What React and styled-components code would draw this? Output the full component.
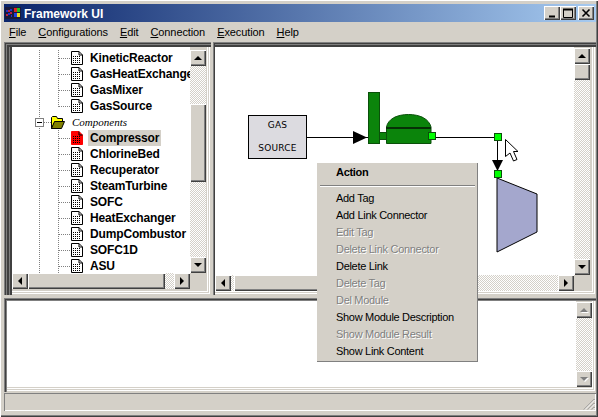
import styled, { createGlobalStyle, css } from 'styled-components';

const GlobalStyle = createGlobalStyle`
    html, body {
        margin: 0;
        padding: 0;
        background: #d4d0c8;
    }
`;

const face = '#d4d0c8';
const raised = css`
    background: ${face};
    box-shadow: inset 1px 1px #fff, inset -1px -1px #404040, inset -2px -2px #808080;
`;
const dither = css`
    background: repeating-conic-gradient(#d4d0c8 0 25%, #fff 0 50%) 0 0 / 2px 2px;
`;
const sunkenEdges = css`
    box-shadow:
        inset 1px 1px #808080,
        inset 2px 2px #404040,
        inset 3px 3px #808080,
        inset 4px 4px #404040,
        inset 5px 5px #404040,
        inset 6px 0 #808080,
        inset 7px 0 #404040,
        inset 8px 0 #404040,
        inset -1px -1px #d4d0c8,
        inset -2px -2px #fff,
        inset -3px -3px #d4d0c8,
        inset -4px -4px #fff;
`;

const Window = styled.div`
    position: relative;
    box-sizing: border-box;
    width: 598px;
    height: 417px;
    padding: 4px 2px 2px 4px;
    display: flex;
    flex-direction: column;
    overflow: hidden;
    background: ${face};
    box-shadow: inset 1px 1px #fff, inset -1px -1px #404040, inset -2px -2px #808080;
    font-family: "Liberation Sans", Arial, sans-serif;
`;

const TitleBar = styled.div`
    height: 18px;
    flex: none;
    display: flex;
    align-items: center;
    padding: 0 2px 0 1px;
    background: linear-gradient(90deg, #0a246a, #a6caf0);
`;

const TitleText = styled.span`
    margin-left: 3px;
    padding-top: 1px;
    flex: 1;
    color: #fff;
    font-size: 12px;
    font-weight: bold;
`;

const CaptionButton = styled.button`
    ${raised}
    width: 16px;
    height: 14px;
    padding: 0;
    border: 0;
    margin-left: ${p => p.$gap || 0}px;
    display: flex;
    align-items: center;
    justify-content: center;
`;

const MenuBar = styled.div`
    height: 20px;
    flex: none;
    display: flex;
    align-items: center;
    gap: 12px;
    padding-left: 5px;
    font-size: 11px;
    letter-spacing: -0.1px;
    color: #000;
`;

const TopRow = styled.div`
    height: 253px;
    flex: none;
    display: flex;
    gap: 2px;
`;

const LeftPane = styled.div`
    ${sunkenEdges}
    box-sizing: border-box;
    width: 207px;
    padding: 5px 5px 6px 8px;
    display: grid;
    grid-template-columns: 178px 16px;
    grid-template-rows: 226px 16px;
    background: ${face};
`;

const RightPane = styled.div`
    box-sizing: border-box;
    width: 383px;
    padding: 5px 6px 4px 2px;
    display: grid;
    grid-template-columns: 359px 16px;
    grid-template-rows: 228px 16px;
    background: ${face};
    box-shadow:
        inset 1px 1px #808080,
        inset 2px 2px #404040,
        inset 0 3px #808080,
        inset 0 4px #404040,
        inset 0 5px #404040,
        inset -1px -1px #d4d0c8,
        inset -2px -2px #fff,
        inset -3px -3px #d4d0c8,
        inset -4px -4px #fff;
`;

const Tree = styled.div`
    background: #fff;
    overflow: hidden;
    padding-top: 3px;
    box-sizing: border-box;
`;

const guideV = (x, size) => `repeating-linear-gradient(to bottom, #808080 0 1px, transparent 1px 2px) ${x}px 0 / 1px ${size} no-repeat`;
const guideH = (x, w) => `repeating-linear-gradient(to right, #808080 0 1px, transparent 1px 2px) ${x}px 8px / ${w}px 1px no-repeat`;

const TreeRow = styled.div`
    height: 16px;
    display: flex;
    align-items: center;
    white-space: nowrap;
    padding-left: 59px;
    background: ${p => `${guideV(27, '100%')}, ${guideV(46, p.$last ? '9px' : '100%')}, ${guideH(47, 12)}`};
`;

const GroupRow = styled.div`
    height: 16px;
    display: flex;
    align-items: center;
    white-space: nowrap;
    padding-left: 23px;
    background: ${guideV(27, '100%')}, ${guideH(32, 8)};
`;

const Expander = styled.span`
    box-sizing: border-box;
    width: 9px;
    height: 9px;
    margin-right: 7px;
    border: 1px solid #808080;
    background: linear-gradient(#000, #000) center / 5px 1px no-repeat #fff;
`;

const GroupLabel = styled.span`
    margin-left: 7px;
    font-family: "Liberation Serif", serif;
    font-style: italic;
    font-size: 11px;
    color: #000;
`;

const NodeLabel = styled.span`
    margin-left: ${p => (p.$selected ? '5px' : '7px')};
    padding: ${p => (p.$selected ? '0 2px' : '0')};
    height: 16px;
    line-height: 16px;
    font-size: 12px;
    font-weight: bold;
    letter-spacing: -0.15px;
    color: #000;
    background: ${p => (p.$selected ? face : 'transparent')};
`;

const VBar = styled.div`
    display: flex;
    flex-direction: column;
    margin-top: ${p => p.$top || 0}px;
`;

const HBar = styled.div`
    display: flex;
`;

const Track = styled.div`
    ${dither}
    ${p => (p.$size ? `flex: none; flex-basis: ${p.$size}px;` : 'flex: 1;')}
`;

const Thumb = styled.div`
    ${raised}
    flex: none;
    flex-basis: ${p => p.$size}px;
`;

const arrows = {
    up: 'border-width: 0 4px 4px; border-color: transparent transparent var(--arrow);',
    down: 'border-width: 4px 4px 0; border-color: var(--arrow) transparent transparent;',
    left: 'border-width: 4px 4px 4px 0; border-color: transparent var(--arrow) transparent transparent;',
    right: 'border-width: 4px 0 4px 4px; border-color: transparent transparent transparent var(--arrow);',
};

const ArrowButton = styled.div`
    ${raised}
    --arrow: ${p => (p.$disabled ? '#808080' : '#000')};
    flex: none;
    width: 16px;
    height: 16px;
    display: flex;
    align-items: center;
    justify-content: center;

    &::after {
        content: '';
        width: 0;
        height: 0;
        border-style: solid;
        ${p => arrows[p.$dir]}
        ${p => p.$disabled && 'filter: drop-shadow(1px 1px 0 #fff);'}
    }
`;

const Corner = styled.div`
    background: ${face};
`;

const Canvas = styled.div`
    position: relative;
    background: #fff;
    overflow: hidden;
`;

const DiagramSvg = styled.svg`
    position: absolute;
    inset: 0;
`;

const SourceNode = styled.div`
    position: absolute;
    left: 33px;
    top: 68px;
    box-sizing: border-box;
    width: 59px;
    height: 44px;
    border: 1px solid #000;
    background: #dcdbe0;
    display: flex;
    flex-direction: column;
    align-items: center;
    justify-content: space-between;
    padding: 3px 0 4px;
    font-family: "DejaVu Sans", sans-serif;
    font-size: 9px;
    line-height: 12px;
    letter-spacing: 0.2px;
    color: #000;
`;

const BottomPane = styled.div`
    box-sizing: border-box;
    height: 94px;
    margin-top: 3px;
    flex: none;
    display: flex;
    padding: 3px 4px 5px 3px;
    background: ${face};
    box-shadow:
        inset 1px 1px #808080,
        inset 2px 2px #404040,
        inset 3px 3px #808080,
        inset -1px -1px #d4d0c8,
        inset -2px -2px #fff,
        inset -3px -3px #d4d0c8,
        inset -4px -4px #fff;
`;

const Output = styled.div`
    flex: 1;
    background: #fff;
`;

const StatusBar = styled.div`
    box-sizing: border-box;
    height: 18px;
    margin-top: 1px;
    flex: none;
    box-shadow: inset 1px 1px #808080, inset -1px -1px #fff;
    position: relative;
`;

const Grip = styled.svg`
    position: absolute;
    right: 1px;
    bottom: 1px;
`;

const ContextMenu = styled.div`
    position: absolute;
    left: 317px;
    top: 163px;
    box-sizing: border-box;
    width: 161px;
    height: 199px;
    padding-left: 2px;
    background: ${face};
    box-shadow: inset -1px -1px #808080;
    font-size: 11px;
    letter-spacing: -0.3px;
`;

const MenuHeading = styled.div`
    height: 18px;
    line-height: 18px;
    padding-left: 17px;
    font-weight: bold;
    color: #000;
`;

const MenuRule = styled.div`
    height: 2px;
    margin: 4px 3px 3px 1px;
    background: linear-gradient(#808080 50%, #fff 50%);
`;

const MenuItem = styled.div`
    height: 17px;
    line-height: 17px;
    padding-left: 17px;
    color: ${p => (p.$disabled ? '#808080' : '#000')};
    text-shadow: ${p => (p.$disabled ? '1px 1px 0 #fff' : 'none')};
`;

function DocIcon({ red }) {
    return (
        <svg width="12" height="14" viewBox="0 0 12 14" style={{ flex: 'none' }}>
            <path d="M0.5 0.5H8L11.5 4V13.5H0.5Z" fill={red ? '#ff0000' : '#fff'} stroke={red ? '#ff0000' : '#000'} />
            <path d="M8 0.5V4H11.5" fill="none" stroke="#000" />
            {[5.5, 7.5, 9.5, 11.5].map(y => (
                <path key={y} d={`M2 ${y}H10`} stroke="#000" strokeDasharray="1 1" />
            ))}
        </svg>
    );
}

function FolderIcon() {
    return (
        <svg width="14" height="13" viewBox="0 0 14 13" style={{ flex: 'none' }}>
            <path d="M0.5 12.5V1.5L1.5 0.5H5.5L6.5 2.5H11.5V5.5H4L0.5 12.5Z" fill="#ffff00" stroke="#000" />
            <path d="M0.5 12.5L3.5 5.5H13.5L10.5 12.5Z" fill="#808000" stroke="#000" />
        </svg>
    );
}

function AppIcon() {
    return (
        <svg width="16" height="14" viewBox="0 0 16 14" style={{ flex: 'none' }}>
            <rect x="0" y="1" width="16" height="12" fill="#1a1a3a" />
            <path d="M1 4h2v2H1zM5 3h2v2H5zM3 7h2v2H3zM6 9h1v2H6z" fill="#2030d0" />
            <path d="M3 4h2v2H3zM1 8h2v2H1zM5 6h2v2H5z" fill="#c02040" />
            <rect x="9" y="2" width="3" height="4" fill="#e02020" />
            <rect x="12" y="2" width="3" height="4" fill="#20c020" />
            <rect x="9" y="7" width="3" height="4" fill="#2040e0" />
            <rect x="12" y="7" width="3" height="4" fill="#f0e020" />
        </svg>
    );
}

function Diagram() {
    return (
        <DiagramSvg width="359" height="228" viewBox="215 47 359 228">
            <path d="M307 137.5H368" stroke="#000" />
            <path d="M353 131L367 137.5L353 144Z" fill="#000" />
            <rect x="368.5" y="92.5" width="11" height="51" fill="#0b840b" stroke="#0a500a" />
            <rect x="379.5" y="132.5" width="7" height="7" fill="#0b840b" stroke="#0a500a" />
            <path d="M386.5 143.5V127C388 119 397 114.5 408.5 114.5C420 114.5 429 119 431 127V143.5Z" fill="#0b840b" stroke="#0a500a" />
            <path d="M386 128H431" stroke="#063006" strokeWidth="2" />
            <path d="M436 137.5H494" stroke="#000" />
            <rect x="428.5" y="132.5" width="7" height="7" fill="#00ff00" stroke="#0a500a" />
            <path d="M497.5 141V170" stroke="#000" />
            <rect x="494.5" y="133.5" width="7" height="7" fill="#00ff00" stroke="#0a500a" />
            <path d="M492 160H503L497.5 171Z" fill="#000" />
            <path d="M497 178L537 194V232L497 252Z" fill="#a4a7cd" stroke="#000" />
            <rect x="494.5" y="170.5" width="7" height="7" fill="#00ff00" stroke="#0a500a" />
            <path d="M505.5 139.5V156.5L510 153L513.5 161L517 159.5L513.5 151.5H518Z" fill="#fff" stroke="#000" />
        </DiagramSvg>
    );
}

const beforeNodes = ['KineticReactor', 'GasHeatExchanger', 'GasMixer', 'GasSource'];
const afterNodes = ['Compressor', 'ChlorineBed', 'Recuperator', 'SteamTurbine', 'SOFC', 'HeatExchanger', 'DumpCombustor', 'SOFC1D', 'ASU'];
const menuLabels = [
    ['Add Tag'],
    ['Add Link Connector'],
    ['Edit Tag', true],
    ['Delete Link Connector', true],
    ['Delete Link'],
    ['Delete Tag', true],
    ['Del Module', true],
    ['Show Module Description'],
    ['Show Module Result', true],
    ['Show Link Content'],
];
const menus = ['File', 'Configurations', 'Edit', 'Connection', 'Execution', 'Help'];

export default function App() {
    return (
        <Window>
            <GlobalStyle />
            <TitleBar>
                <AppIcon />
                <TitleText>Framework UI</TitleText>
                <CaptionButton>
                    <svg width="10" height="10"><path d="M2 8.5H8" stroke="#000" strokeWidth="2" /></svg>
                </CaptionButton>
                <CaptionButton>
                    <svg width="10" height="10"><path d="M0.5 1.5H9.5V9.5H0.5Z" fill="none" stroke="#000" /><path d="M0 1.5H10" stroke="#000" strokeWidth="2" /></svg>
                </CaptionButton>
                <CaptionButton $gap={2}>
                    <svg width="10" height="10"><path d="M1.5 1.5L8.5 8.5M8.5 1.5L1.5 8.5" stroke="#000" strokeWidth="1.6" /></svg>
                </CaptionButton>
            </TitleBar>
            <MenuBar>
                {menus.map(m => (
                    <span key={m}><u>{m[0]}</u>{m.slice(1)}</span>
                ))}
            </MenuBar>
            <TopRow>
                <LeftPane>
                    <Tree>
                        {beforeNodes.map((name, i) => (
                            <TreeRow key={name} $last={i === beforeNodes.length - 1}>
                                <DocIcon />
                                <NodeLabel>{name}</NodeLabel>
                            </TreeRow>
                        ))}
                        <GroupRow>
                            <Expander />
                            <FolderIcon />
                            <GroupLabel>Components</GroupLabel>
                        </GroupRow>
                        {afterNodes.map((name, i) => (
                            <TreeRow key={name}>
                                <DocIcon red={i === 0} />
                                <NodeLabel $selected={i === 0}>{name}</NodeLabel>
                            </TreeRow>
                        ))}
                    </Tree>
                    <VBar $top={3}>
                        <ArrowButton $dir="up" />
                        <Track $size={38} />
                        <Thumb $size={78} />
                        <Track />
                        <ArrowButton $dir="down" />
                    </VBar>
                    <HBar>
                        <ArrowButton $dir="left" />
                        <Thumb $size={137} />
                        <Track />
                        <ArrowButton $dir="right" />
                    </HBar>
                    <Corner />
                </LeftPane>
                <RightPane>
                    <Canvas>
                        <Diagram />
                        <SourceNode>
                            <span>GAS</span>
                            <span>SOURCE</span>
                        </SourceNode>
                    </Canvas>
                    <VBar $top={1}>
                        <ArrowButton $dir="up" />
                        <Thumb $size={16} />
                        <Track />
                        <ArrowButton $dir="down" />
                    </VBar>
                    <HBar>
                        <ArrowButton $dir="left" />
                        <Track $size={3} />
                        <Thumb $size={100} />
                        <Track />
                        <ArrowButton $dir="right" />
                    </HBar>
                    <Corner />
                </RightPane>
            </TopRow>
            <BottomPane>
                <Output />
                <VBar $top={1}>
                    <ArrowButton $dir="up" $disabled />
                    <Track />
                    <ArrowButton $dir="down" $disabled />
                </VBar>
            </BottomPane>
            <StatusBar>
                <Grip width="12" height="12" viewBox="0 0 12 12">
                    <path d="M11.5 1L1 11.5M11.5 5L5 11.5M11.5 9L9 11.5" stroke="#808080" />
                    <path d="M11.5 2L2 11.5M11.5 6L6 11.5M11.5 10L10 11.5" stroke="#fff" />
                </Grip>
            </StatusBar>
            <ContextMenu>
                <MenuHeading>Action</MenuHeading>
                <MenuRule />
                {menuLabels.map(([label, disabled]) => (
                    <MenuItem key={label} $disabled={disabled}>{label}</MenuItem>
                ))}
            </ContextMenu>
        </Window>
    );
}
